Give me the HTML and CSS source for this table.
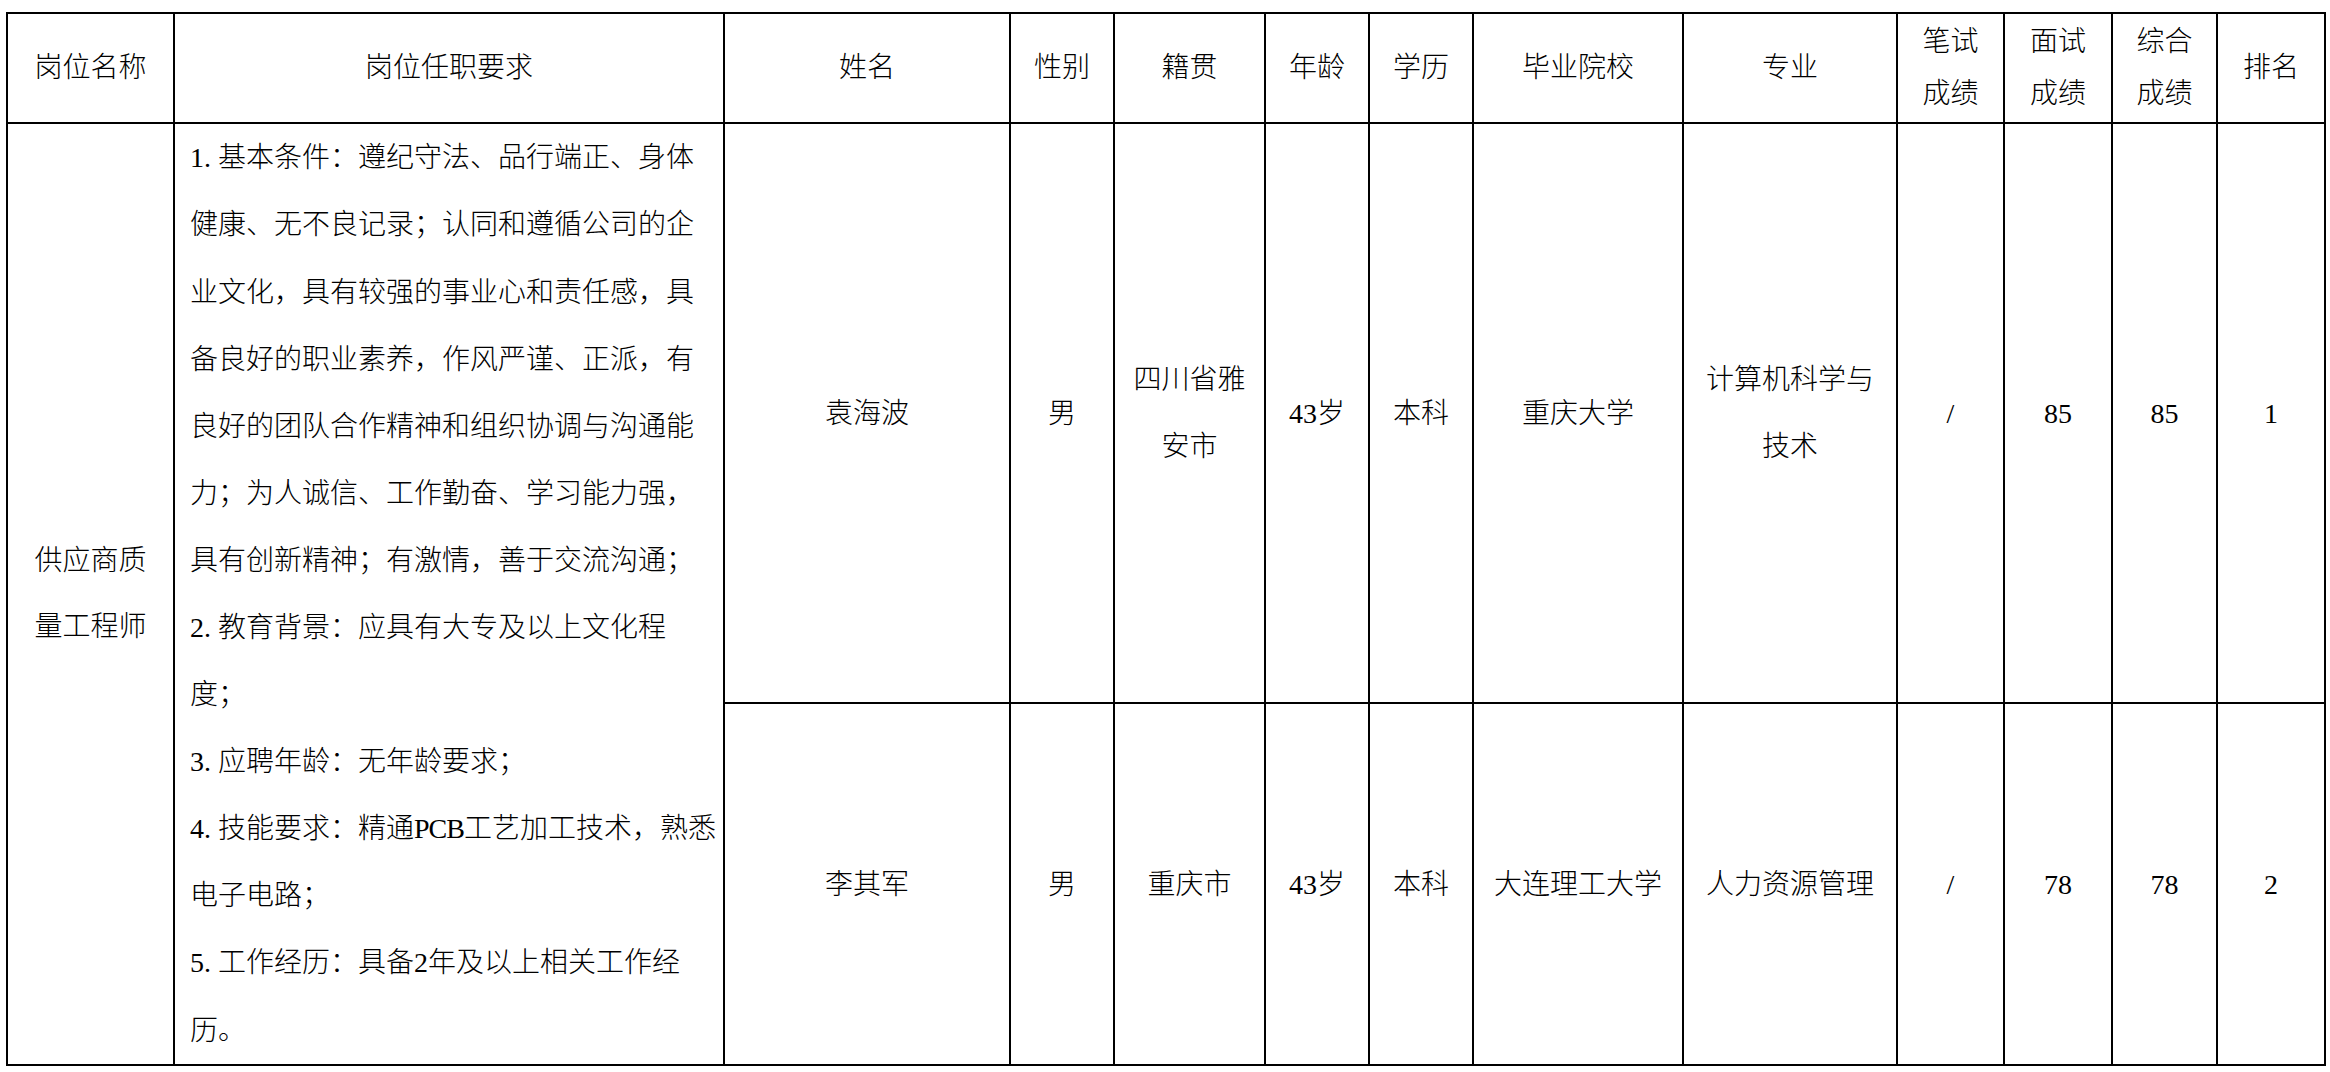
FILE: index.html
```html
<!DOCTYPE html>
<html lang="zh-CN">
<head>
<meta charset="utf-8">
<title>岗位招聘成绩表</title>
<link rel="stylesheet" href="styles.css">
</head>
<body>
<table class="grid">
  <colgroup>
    <col class="c-post">
    <col class="c-req">
    <col class="c-name">
    <col class="c-sex">
    <col class="c-home">
    <col class="c-age">
    <col class="c-edu">
    <col class="c-school">
    <col class="c-major">
    <col class="c-s1">
    <col class="c-s2">
    <col class="c-s3">
    <col class="c-rank">
  </colgroup>
  <thead>
    <tr class="head">
      <th>岗位名称</th>
      <th>岗位任职要求</th>
      <th>姓名</th>
      <th>性别</th>
      <th>籍贯</th>
      <th>年龄</th>
      <th>学历</th>
      <th>毕业院校</th>
      <th>专业</th>
      <th class="two">笔试<br>成绩</th>
      <th class="two">面试<br>成绩</th>
      <th class="two">综合<br>成绩</th>
      <th>排名</th>
    </tr>
  </thead>
  <tbody>
    <tr class="row-a">
      <td rowspan="2" class="post">供应商质<br>量工程师</td>
      <td rowspan="2" class="req"><span class="num">1.</span>基本条件：遵纪守法、品行端正、身体<br>健康、无不良记录；认同和遵循公司的企<br>业文化，具有较强的事业心和责任感，具<br>备良好的职业素养，作风严谨、正派，有<br>良好的团队合作精神和组织协调与沟通能<br>力；为人诚信、工作勤奋、学习能力强，<br>具有创新精神；有激情，善于交流沟通；<br><span class="num">2.</span>教育背景：应具有大专及以上文化程<br>度；<br><span class="num">3.</span>应聘年龄：无年龄要求；<br><span class="num">4.</span>技能要求：精通<span class="latin">PCB</span>工艺加工技术，熟悉<br>电子电路；<br><span class="num">5.</span>工作经历：具备2年及以上相关工作经<br>历。</td>
      <td>袁海波</td>
      <td>男</td>
      <td>四川省雅<br>安市</td>
      <td>43岁</td>
      <td>本科</td>
      <td>重庆大学</td>
      <td>计算机科学与<br>技术</td>
      <td class="slash">/</td>
      <td>85</td>
      <td>85</td>
      <td>1</td>
    </tr>
    <tr class="row-b">
      <td>李其军</td>
      <td>男</td>
      <td>重庆市</td>
      <td>43岁</td>
      <td>本科</td>
      <td>大连理工大学</td>
      <td>人力资源管理</td>
      <td class="slash">/</td>
      <td>78</td>
      <td>78</td>
      <td>2</td>
    </tr>
  </tbody>
</table>
</body>
</html>
```

FILE: styles.css
```css
html, body {
  margin: 0;
  padding: 0;
  background: #ffffff;
}

body {
  font-family: "Liberation Serif", "Noto Sans CJK SC", serif;
  font-size: 28px;
  font-weight: 300;
  color: #000000;
}

.grid {
  border-collapse: separate;
  border-spacing: 0;
  table-layout: fixed;
  width: 2320px;
  margin: 12px 0 0 6px;
  border-top: 2px solid #000;
  border-left: 2px solid #000;
}

.grid th,
.grid td {
  box-sizing: border-box;
  border-right: 2px solid #000;
  border-bottom: 2px solid #000;
  padding: 0;
  text-align: center;
  vertical-align: middle;
  font-weight: 300;
  white-space: nowrap;
  overflow: visible;
}

.c-post   { width: 167px; }
.c-req    { width: 550px; }
.c-name   { width: 286px; }
.c-sex    { width: 104px; }
.c-home   { width: 151px; }
.c-age    { width: 104px; }
.c-edu    { width: 104px; }
.c-school { width: 210px; }
.c-major  { width: 214px; }
.c-s1     { width: 107px; }
.c-s2     { width: 108px; }
.c-s3     { width: 105px; }
.c-rank   { width: 108px; }

.head {
  height: 110px;
}

.head th {
  line-height: 52px;
}

.row-a {
  height: 580px;
}

.row-b {
  height: 362px;
}

.grid td {
  line-height: 67px;
}

.grid td.req {
  text-align: left;
  padding-left: 15px;
  line-height: 67.1px;
}

.req .num {
  display: inline-block;
  width: 1em;
}

.req .latin {
  letter-spacing: -1px;
}

.grid td.post {
  line-height: 66px;
}

.slash {
  font-weight: 300;
}
```
